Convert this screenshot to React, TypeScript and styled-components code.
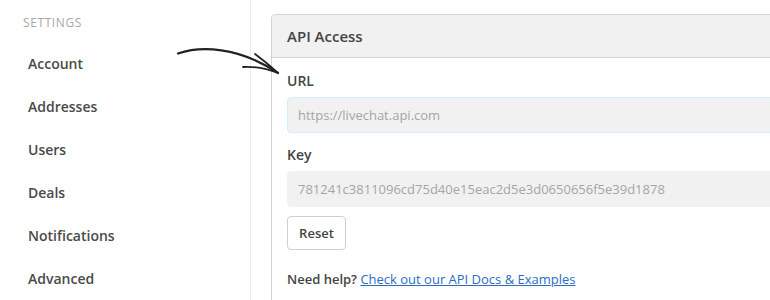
import styled, { createGlobalStyle } from "styled-components";

const GlobalStyle = createGlobalStyle`
  html, body {
    margin: 0;
    padding: 0;
    background: #fff;
  }
  body {
    font-family: "Open Sans", "Noto Sans", Arial, sans-serif;
    color: #444;
  }
`;

const Page = styled.div`
  position: relative;
  display: flex;
  width: 770px;
  height: 300px;
  overflow: hidden;
`;

const Sidebar = styled.nav`
  width: 250px;
  flex-shrink: 0;
  border-right: 1px solid #ebebeb;
  padding-top: 15px;
  box-sizing: content-box;
`;

const SectionTitle = styled.div`
  font-size: 12px;
  line-height: 16px;
  letter-spacing: 0.6px;
  color: #a8a8a8;
  padding-left: 23px;
  margin-bottom: 11px;
`;

const NavItem = styled.div`
  height: 43px;
  display: flex;
  align-items: center;
  padding-left: 28px;
  font-size: 14px;
  font-weight: 600;
  color: #4a4a4a;
`;

const Main = styled.main`
  flex: 1;
  padding: 14px 0 0 20px;
  overflow: hidden;
`;

const Card = styled.section`
  width: 580px;
  border: 1px solid #d3d3d3;
  border-radius: 4px;
  height: 320px;
`;

const CardHeader = styled.header`
  height: 42px;
  display: flex;
  align-items: center;
  padding: 0 15px;
  background: #f1f1f1;
  border-bottom: 1px solid #d6d6d6;
  border-radius: 4px 4px 0 0;
  font-size: 15px;
  font-weight: 600;
  color: #444;
`;

const CardBody = styled.div`
  padding: 13px 15px 0;
`;

const Label = styled.div`
  font-size: 14px;
  font-weight: 600;
  line-height: 20px;
  color: #444;
  margin-bottom: 6px;
`;

const Field = styled.div<{ $focused?: boolean }>`
  height: 34px;
  display: flex;
  align-items: center;
  padding-left: 10px;
  background: #f1f1f1;
  border: 1px solid ${(p) => (p.$focused ? "#d4ecfa" : "#f1f1f1")};
  border-radius: 4px;
  font-size: 13px;
  color: #a5a5a5;
  margin-bottom: ${(p) => (p.$focused ? "12px" : "9px")};
`;

const ResetButton = styled.button`
  width: 59px;
  height: 34px;
  font-family: inherit;
  font-size: 13px;
  font-weight: 600;
  color: #444;
  background: #fff;
  border: 1px solid #cfcfcf;
  border-radius: 4px;
  padding: 0;
  margin-bottom: 19px;
`;

const Help = styled.div`
  font-size: 13px;
  line-height: 20px;
  font-weight: 600;
  color: #444;
`;

const DocLink = styled.a`
  font-weight: 400;
  color: #2b6cc4;
  text-decoration: underline;
`;

const Arrow = styled.svg`
  position: absolute;
  left: 170px;
  top: 40px;
  width: 120px;
  height: 40px;
  pointer-events: none;
`;

const items = ["Account", "Addresses", "Users", "Deals", "Notifications", "Advanced"];

export default function App() {
  return (
    <Page>
      <GlobalStyle />
      <Sidebar>
        <SectionTitle>SETTINGS</SectionTitle>
        {items.map((i) => (
          <NavItem key={i}>{i}</NavItem>
        ))}
      </Sidebar>
      <Main>
        <Card>
          <CardHeader>API Access</CardHeader>
          <CardBody>
            <Label>URL</Label>
            <Field $focused>https://livechat.api.com</Field>
            <Label>Key</Label>
            <Field>781241c3811096cd75d40e15eac2d5e3d0650656f5e39d1878</Field>
            <ResetButton>Reset</ResetButton>
            <Help>
              Need help? <DocLink href="#">Check out our API Docs &amp; Examples</DocLink>
            </Help>
          </CardBody>
        </Card>
      </Main>
      <Arrow viewBox="170 40 120 40">
        <path
          d="M178 53.5 C 200 46, 238 46, 278 73"
          fill="none"
          stroke="#222"
          strokeWidth="2.2"
          strokeLinecap="round"
        />
        <path
          d="M255 54 Q 266 62 278 73 M243 67 Q 261 66 278 73"
          fill="none"
          stroke="#222"
          strokeWidth="1.8"
          strokeLinecap="round"
        />
      </Arrow>
    </Page>
  );
}
